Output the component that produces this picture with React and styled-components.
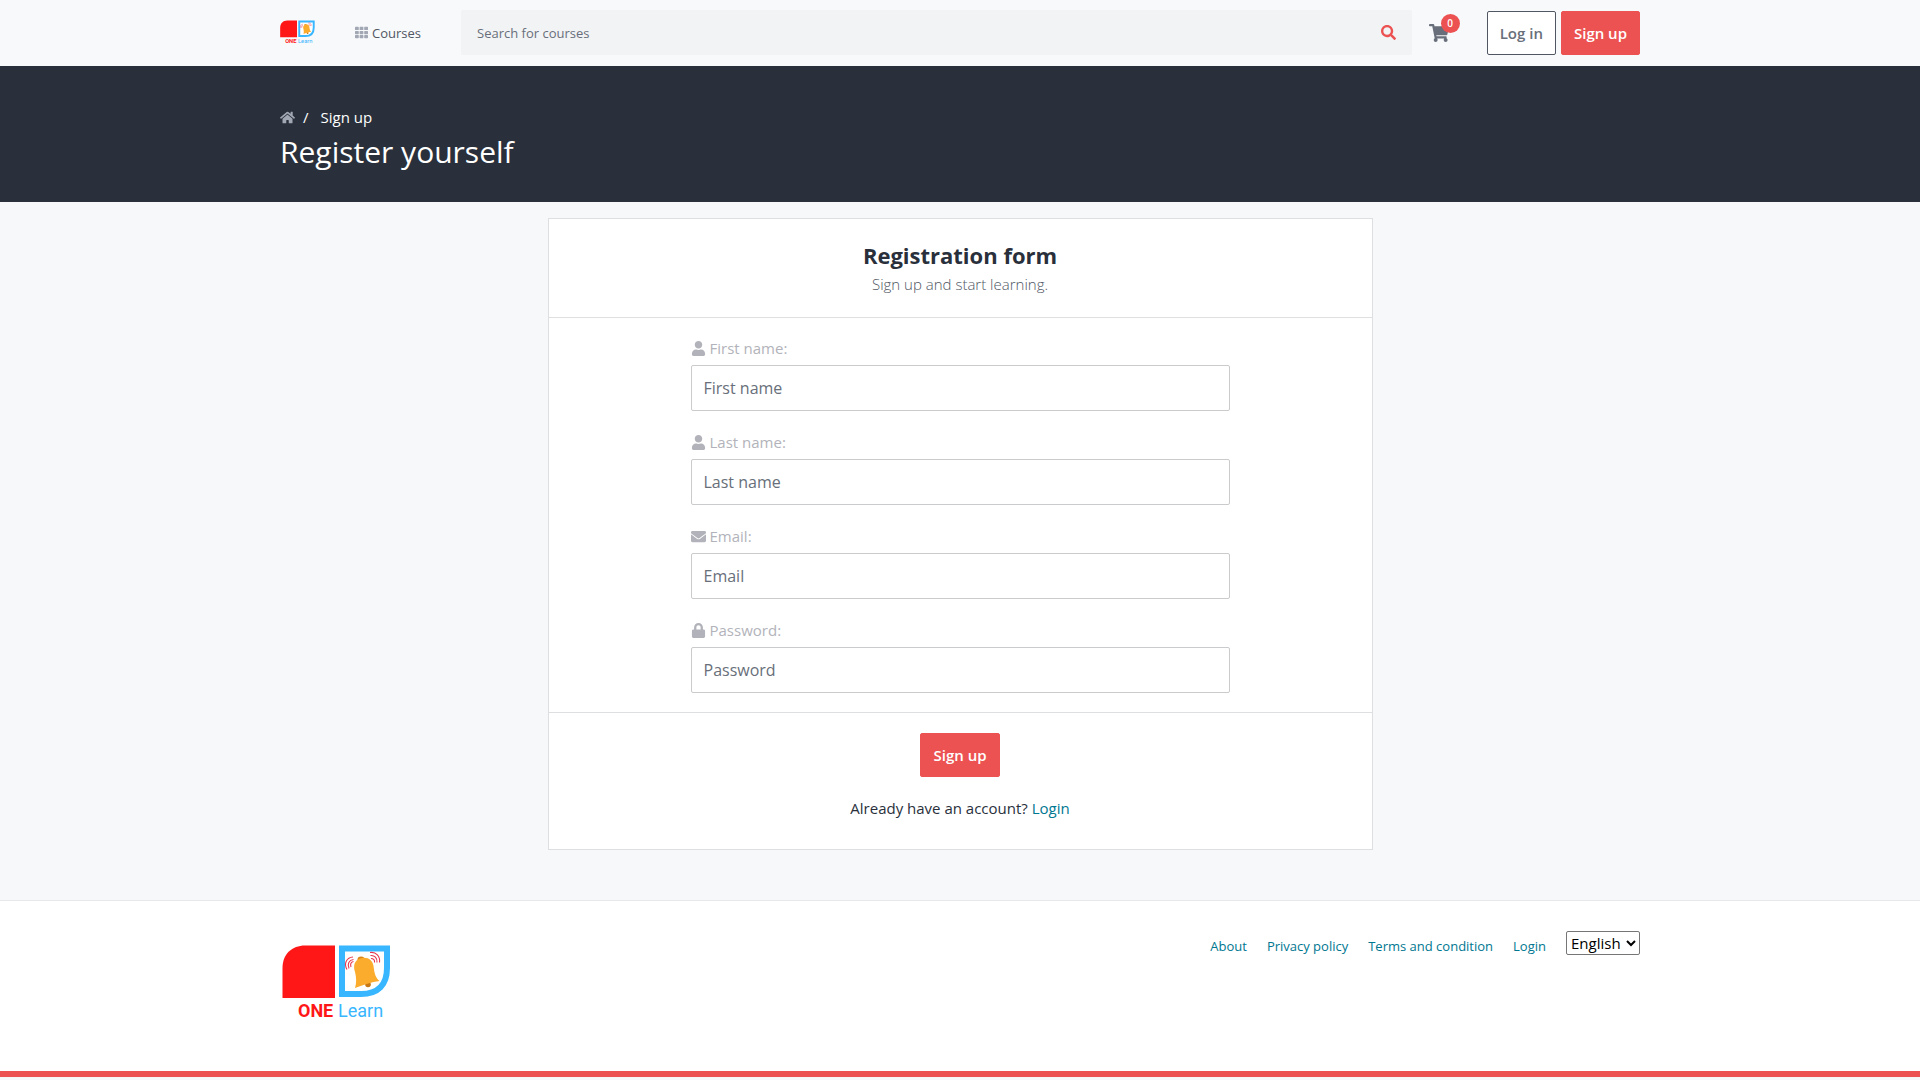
import { useState } from 'react';
import styled, { createGlobalStyle } from 'styled-components';
import {
  FaEnvelope,
  FaHome,
  FaLock,
  FaSearch,
  FaShoppingCart,
  FaTh,
  FaUser,
} from 'react-icons/fa';

const GlobalStyle = createGlobalStyle`
  :root {
    --red: #ec5252;
    --dark: #29303b;
    --gray: #686f7a;
    --ltgray: #b2b3ba;
    --page: #f7f8fa;
    --line: #dedfe0;
    --teal: #007791;
  }

  * {
    box-sizing: border-box;
  }

  body {
    margin: 0;
    background-color: var(--page);
    color: var(--dark);
    font-family: 'Open Sans', sans-serif;
    font-size: 15px;
    line-height: 24px;
  }

  a {
    color: var(--teal);
    text-decoration: none;
  }

  button,
  input,
  select {
    font-family: inherit;
  }
`;

const Container = styled.div`
  width: 100%;
  max-width: 1390px;
  margin: 0 auto;
  padding: 0 15px;
`;

const HeaderBar = styled.header`
  background-color: #f8f9fb;
  padding: 10px 0 11px;
`;

const HeaderRow = styled(Container)`
  display: flex;
  align-items: center;
`;

const LogoLink = styled.a`
  display: block;
  line-height: 0;
`;

const CoursesLink = styled.a`
  display: flex;
  align-items: center;
  gap: 4px;
  margin: 0 40px;
  color: var(--gray);
  font-size: 13px;
  svg {
    color: #a1a7b3;
  }
  span {
    color: #505763;
  }
`;

const SearchForm = styled.form`
  display: flex;
  flex: 1;
  height: 45px;
  border-radius: 2px;
  background-color: #f2f3f5;
`;

const SearchInput = styled.input`
  flex: 1;
  min-width: 0;
  border: 0;
  outline: 0;
  padding: 0 16px;
  background: transparent;
  font-size: 13px;
  &::placeholder {
    color: var(--gray);
    opacity: 1;
  }
`;

const SearchButton = styled.button`
  display: flex;
  align-items: center;
  border: 0;
  padding: 0 16px;
  background: transparent;
  color: var(--red);
  cursor: pointer;
`;

const CartLink = styled.a`
  position: relative;
  display: flex;
  margin: 0 38px 0 17px;
  color: var(--gray);
`;

const CartBadge = styled.span`
  position: absolute;
  top: -9px;
  right: -11px;
  width: 19px;
  height: 19px;
  border-radius: 50%;
  background-color: var(--red);
  color: white;
  font-size: 10px;
  font-weight: 600;
  line-height: 19px;
  text-align: center;
`;

const ButtonGroup = styled.div`
  display: flex;
  gap: 5px;
`;

const Button = styled.button`
  height: 44px;
  padding: 0 12px;
  border: 1px solid ${(props) => (props.$outline ? '#505763' : 'var(--red)')};
  border-radius: 2px;
  background-color: ${(props) => (props.$outline ? 'white' : 'var(--red)')};
  color: ${(props) => (props.$outline ? 'var(--gray)' : 'white')};
  font-size: 15px;
  font-weight: 600;
  cursor: pointer;
`;

const Hero = styled.section`
  padding: 39px 0 32px;
  background-color: var(--dark);
  color: white;
`;

const Breadcrumb = styled.nav`
  display: flex;
  align-items: center;
  font-weight: 500;
  a {
    display: flex;
    color: #a1a7b3;
  }
  span {
    margin: 0 12px 0 8px;
  }
`;

const HeroTitle = styled.h1`
  margin: 5px 0 0;
  font-size: 30px;
  font-weight: 400;
  line-height: 36px;
`;

const Main = styled.main`
  padding: 16px 15px 50px;
`;

const Card = styled.div`
  max-width: 825px;
  margin: 0 auto;
  border: 1px solid var(--line);
  background-color: white;
`;

const CardHeader = styled.div`
  padding: 19px 20px 21px;
  border-bottom: 1px solid var(--line);
  text-align: center;
`;

const CardTitle = styled.h2`
  margin: 0;
  font-size: 22px;
  font-weight: 700;
  line-height: 34px;
`;

const CardSubtitle = styled.p`
  margin: 0;
  color: #505763;
  font-weight: 300;
`;

const Fields = styled.div`
  display: flex;
  flex-direction: column;
  gap: 20px;
  width: 100%;
  max-width: 539px;
  margin: 0 auto;
  padding: 19px 0;
`;

const Field = styled.div`
  display: flex;
  flex-direction: column;
  gap: 6px;
`;

const Label = styled.label`
  display: flex;
  align-items: center;
  gap: 4px;
  color: var(--ltgray);
  line-height: 22px;
  svg {
    width: auto;
    height: 15px;
  }
`;

const TextInput = styled.input`
  width: 100%;
  height: 46px;
  padding: 0 12px;
  border: 1px solid #cacbcc;
  border-radius: 2px;
  background-color: white;
  color: var(--dark);
  font-size: 16px;
  &::placeholder {
    color: var(--gray);
    opacity: 1;
  }
`;

const CardFooter = styled.div`
  display: flex;
  flex-direction: column;
  align-items: center;
  gap: 19px;
  padding: 20px 20px 29px;
  border-top: 1px solid var(--line);
`;

const AccountText = styled.p`
  margin: 0;
`;

const FooterBar = styled.footer`
  border-top: 1px solid #e7e8eb;
  border-bottom: 6px solid var(--red);
  background-color: white;
`;

const FooterRow = styled(Container)`
  display: flex;
  align-items: flex-start;
  justify-content: space-between;
  min-height: 170px;
  padding-top: 27px;
`;

const FooterLogo = styled(LogoLink)`
  padding: 17px 2px;
`;

const FooterNav = styled.nav`
  display: flex;
  align-items: center;
  gap: 20px;
  font-size: 13px;
  a {
    padding-top: 6px;
  }
`;

const LanguageSelect = styled.select`
  width: 74px;
  height: 24px;
  border: 1px solid #767676;
  border-radius: 2px;
  background-color: white;
  color: black;
  font-size: 15px;
`;

function Logo({ width, height }) {
  return (
    <svg width={width} height={height} viewBox="0 0 109 76" role="img" aria-label="ONE Learn">
      <path d="M.5 53V23C.5 9 10 .5 23 .5h30V53z" fill="#ff1717" />
      <path d="M60 3.5h45V23c0 17-9 26-26 26H60z" fill="white" stroke="#38b6ff" strokeWidth="6" />
      <g fill="none" stroke="#e8384f" strokeWidth="1.1">
        <path d="M65 24.500c-3.500-6-.5-12 6-12.500" />
        <path d="M67 23.500c-2-4.500 0-8.500 4.500-9" />
        <path d="M69 22c-1-3 0-5 2.500-5.500" />
        <path d="M88 7.500c6-1 10.500 4 9.500 10" />
        <path d="M88.500 10.500c4-.5 7 2.500 6.500 7" />
        <path d="M89 13.500c2.500 0 4 1.500 3.500 4" />
      </g>
      <ellipse cx="79" cy="14.500" rx="3.500" ry="3" fill="#dc8617" />
      <ellipse cx="86" cy="39.500" rx="2.800" ry="2.800" fill="#c77713" />
      <path
        d="M78 13.500c7-2.500 12.500 1 13.500 7.500 1 8 2 11.500 6 15-8 1-16 4-24.500 7 1.500-5 1.500-10 0-16-2-6.500-.5-11.500 5-13.500z"
        fill="#fbac2c"
      />
      <text
        x="16"
        y="72"
        fill="#ff1717"
        fontFamily="Roboto, sans-serif"
        fontSize="18"
        fontWeight="700"
      >
        ONE
      </text>
      <text x="56" y="72" fill="#38b6ff" fontFamily="Roboto, sans-serif" fontSize="18">
        Learn
      </text>
    </svg>
  );
}

const fields = [
  { id: 'first_name', label: 'First name', type: 'text', Icon: FaUser },
  { id: 'last_name', label: 'Last name', type: 'text', Icon: FaUser },
  { id: 'email', label: 'Email', type: 'email', Icon: FaEnvelope },
  { id: 'password', label: 'Password', type: 'password', Icon: FaLock },
];

function Header() {
  return (
    <HeaderBar>
      <HeaderRow>
        <LogoLink href="#home">
          <Logo width={35} height={25} />
        </LogoLink>
        <CoursesLink href="#courses">
          <FaTh size={13} />
          <span>Courses</span>
        </CoursesLink>
        <SearchForm onSubmit={(e) => e.preventDefault()}>
          <SearchInput type="text" placeholder="Search for courses" aria-label="Search for courses" />
          <SearchButton type="submit" aria-label="Search">
            <FaSearch size={15} />
          </SearchButton>
        </SearchForm>
        <CartLink href="#cart" aria-label="Cart">
          <FaShoppingCart size={20} />
          <CartBadge>0</CartBadge>
        </CartLink>
        <ButtonGroup>
          <Button type="button" $outline>
            Log in
          </Button>
          <Button type="button">Sign up</Button>
        </ButtonGroup>
      </HeaderRow>
    </HeaderBar>
  );
}

function RegistrationForm() {
  const [values, setValues] = useState({});

  return (
    <Card>
      <CardHeader>
        <CardTitle>Registration form</CardTitle>
        <CardSubtitle>Sign up and start learning.</CardSubtitle>
      </CardHeader>
      <form onSubmit={(e) => e.preventDefault()}>
        <Fields>
          {fields.map(({ id, label, type, Icon }) => (
            <Field key={id}>
              <Label htmlFor={id}>
                <Icon />
                {label}:
              </Label>
              <TextInput
                id={id}
                type={type}
                placeholder={label}
                value={values[id] || ''}
                onChange={(e) => setValues({ ...values, [id]: e.target.value })}
              />
            </Field>
          ))}
        </Fields>
        <CardFooter>
          <Button type="submit">Sign up</Button>
          <AccountText>
            Already have an account? <a href="#login">Login</a>
          </AccountText>
        </CardFooter>
      </form>
    </Card>
  );
}

function Footer() {
  return (
    <FooterBar>
      <FooterRow>
        <FooterLogo href="#home">
          <Logo width={109} height={76} />
        </FooterLogo>
        <FooterNav>
          <a href="#about">About</a>
          <a href="#privacy">Privacy policy</a>
          <a href="#terms">Terms and condition</a>
          <a href="#login">Login</a>
          <LanguageSelect aria-label="Language" defaultValue="english">
            <option value="english">English</option>
          </LanguageSelect>
        </FooterNav>
      </FooterRow>
    </FooterBar>
  );
}

function App() {
  return (
    <>
      <GlobalStyle />
      <Header />
      <Hero>
        <Container>
          <Breadcrumb>
            <a href="#home" aria-label="Home">
              <FaHome size={15} />
            </a>
            <span>/</span>
            Sign up
          </Breadcrumb>
          <HeroTitle>Register yourself</HeroTitle>
        </Container>
      </Hero>
      <Main>
        <RegistrationForm />
      </Main>
      <Footer />
    </>
  );
}

export default App;
